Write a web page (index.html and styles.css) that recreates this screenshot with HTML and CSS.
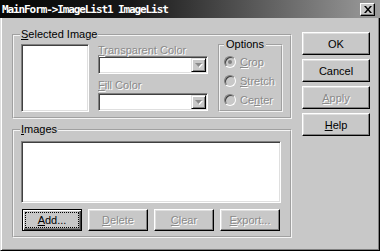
FILE: index.html
```html
<!DOCTYPE html>
<html lang="en">
<head>
  <meta charset="UTF-8" />
  <title>ImageList</title>
  <link rel="stylesheet" href="styles.css">
</head>
<body>
  <div class="titlebar">
    <span class="title">MainForm-&gt;ImageList1 ImageList</span>
    <span class="close">
      <svg width="8" height="7" viewBox="0 0 8 7"><path d="M0 0h2l2 2.4L6 0h2L5 3.5 8 7H6L4 4.6 2 7H0l3-3.5z" fill="#000"/></svg>
    </span>
  </div>

  <div class="frame">
    <div class="left">
      <fieldset class="group sel">
        <legend><u>S</u>elected Image</legend>
        <div class="selrow">
          <div class="preview"></div>
          <div class="colors">
            <div class="lbl dis"><u>T</u>ransparent Color</div>
            <div class="combo"><span class="drop"><svg width="7" height="4" viewBox="0 0 7 4"><path d="M0 0h7L3.5 4z" fill="#8a8a8a"/></svg></span></div>
            <div class="lbl dis second"><u>F</u>ill Color</div>
            <div class="combo lower"><span class="drop"><svg width="7" height="4" viewBox="0 0 7 4"><path d="M0 0h7L3.5 4z" fill="#8a8a8a"/></svg></span></div>
          </div>
          <fieldset class="group opts">
            <legend>Options</legend>
            <div class="radio dis"><span class="dot on"></span><span><u>C</u>rop</span></div>
            <div class="radio dis"><span class="dot"></span><span><u>S</u>tretch</span></div>
            <div class="radio dis"><span class="dot"></span><span>Ce<u>n</u>ter</span></div>
          </fieldset>
        </div>
      </fieldset>

      <fieldset class="group imgs">
        <legend><u>I</u>mages</legend>
        <div class="list"></div>
        <div class="btnrow">
          <div class="btn small focused"><span class="cap"><u>A</u>dd...</span></div>
          <div class="btn small dis"><span class="cap"><u>D</u>elete</span></div>
          <div class="btn small dis"><span class="cap"><u>C</u>lear</span></div>
          <div class="btn small dis"><span class="cap"><u>E</u>xport...</span></div>
        </div>
      </fieldset>
    </div>

    <div class="right">
      <div class="btn"><span class="cap">OK</span></div>
      <div class="btn"><span class="cap">Cancel</span></div>
      <div class="btn dis"><span class="cap"><u>A</u>pply</span></div>
      <div class="btn"><span class="cap"><u>H</u>elp</span></div>
    </div>
  </div>
</body>
</html>
```

FILE: styles.css
```css
* {
  box-sizing: border-box;
}

body {
  margin: 0;
  width: 380px;
  height: 251px;
  overflow: hidden;
  background: #c8c8c8;
  font-family: "Liberation Sans", Arial, sans-serif;
  font-size: 11px;
  color: #000;
}

.titlebar {
  height: 18px;
  display: flex;
  align-items: center;
  justify-content: space-between;
  padding: 0 5px 0 2px;
  background: linear-gradient(to right, #060606, #181818 35%, #9c9c9c);
}

.title {
  color: #fff;
  font-family: "DejaVu Sans Mono", monospace;
  font-weight: bold;
  font-size: 11px;
  letter-spacing: -1.1px;
}

.close {
  width: 15px;
  height: 13px;
  display: flex;
  align-items: center;
  justify-content: center;
  background: #c8c8c8;
  border: 1px solid;
  border-color: #fff #000 #000 #fff;
  box-shadow: inset -1px -1px #808080;
}

.frame {
  height: 233px;
  display: flex;
  align-items: flex-start;
  padding: 10px 0 0 11px;
  border-style: solid;
  border-width: 0 1px 1px 1px;
  border-color: #dfdfdf #000 #000 #dfdfdf;
  box-shadow: inset 1px 0 #fff, inset -1px -1px #808080;
}

.left {
  width: 280px;
}

.right {
  width: 68px;
  margin: 4px 0 0 10px;
  display: flex;
  flex-direction: column;
  gap: 4px;
}

/* group boxes */
.group {
  margin: 0;
  min-width: 0;
  border: 2px groove #f4f4f4;
}

.group legend {
  padding: 0 1px;
  margin-left: -1px;
  line-height: 13px;
}

.sel {
  padding: 3px 7px 5px 7px;
}

.selrow {
  display: flex;
  align-items: flex-start;
}

.preview {
  width: 68px;
  height: 68px;
  background: #fff;
  border: 1px solid;
  border-color: #808080 #fff #fff #808080;
  box-shadow: inset 1px 1px #404040, inset -1px -1px #dfdfdf;
}

.colors {
  width: 110px;
  margin-left: 9px;
}

.lbl {
  line-height: 12px;
  height: 12px;
  white-space: nowrap;
}

.lbl.second {
  margin-top: 5px;
}

.combo {
  height: 18px;
  padding: 1px;
  display: flex;
  justify-content: flex-end;
  background: #fff;
  border: 1px solid;
  border-color: #808080 #fff #fff #808080;
  box-shadow: inset 1px 1px #404040, inset -1px -1px #dfdfdf;
}

.combo.lower {
  margin-top: 2px;
}

.drop {
  width: 15px;
  height: 14px;
  display: flex;
  align-items: center;
  justify-content: center;
  background: #c8c8c8;
  border: 1px solid;
  border-color: #dfdfdf #000 #000 #dfdfdf;
  box-shadow: inset 1px 1px #fff, inset -1px -1px #808080;
}

.drop svg {
  filter: drop-shadow(1px 1px 0 #fff);
}

.opts {
  width: 65px;
  margin: -6px 0 0 10px;
  padding: 1px 2px 1px 4px;
}

.opts legend {
  padding: 0 2px;
  margin-left: 0;
}

.radio {
  height: 19px;
  display: flex;
  align-items: center;
  gap: 4px;
}

.dot {
  width: 12px;
  height: 12px;
  flex: none;
  display: flex;
  align-items: center;
  justify-content: center;
  border-radius: 50%;
  background: #c8c8c8;
  border: 1px solid;
  border-color: #808080 #fff #fff #808080;
  box-shadow: inset 1px 1px #404040;
}

.dot.on::after {
  content: "";
  width: 4px;
  height: 4px;
  border-radius: 50%;
  background: #808080;
}

.imgs {
  margin-top: 4px;
  padding: 5px 9px 5px 7px;
}

.list {
  width: 260px;
  height: 62px;
  background: #fff;
  border: 1px solid;
  border-color: #808080 #fff #fff #808080;
  box-shadow: inset 1px 1px #404040, inset -1px -1px #dfdfdf;
}

.btnrow {
  display: flex;
  gap: 6px;
  margin-top: 6px;
  padding-left: 1px;
}

/* push buttons */
.btn {
  width: 68px;
  height: 23px;
  display: flex;
  padding: 2px;
  background: #c8c8c8;
  border: 1px solid;
  border-color: #fff #000 #000 #fff;
  box-shadow: inset -1px -1px #808080, inset 1px 1px #dfdfdf;
}

.btn.small {
  width: 60px;
  height: 22px;
}

.btn .cap {
  flex: 1;
  display: flex;
  align-items: center;
  justify-content: center;
  border: 1px dotted transparent;
}

.btn.focused {
  border-color: #000;
  box-shadow: inset 1px 1px #fff, inset -1px -1px #404040, inset -2px -2px #808080;
}

.btn.focused .cap {
  border-color: #000;
}

.dis {
  color: #8a8a8a;
  text-shadow: 1px 1px 0 #fff;
}
```
